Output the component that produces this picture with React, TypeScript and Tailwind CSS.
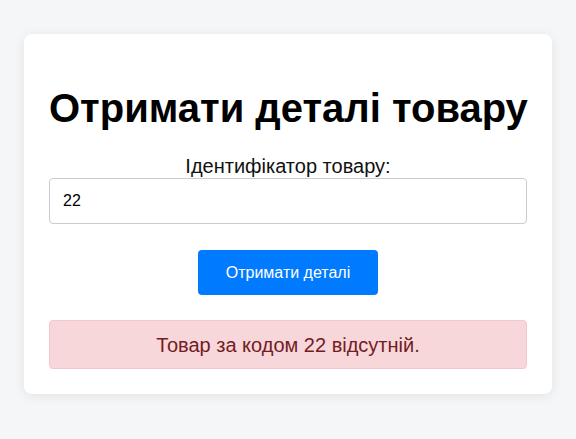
export default function App() {
  return (
    <div className="min-h-screen w-full bg-[#f5f6f8] px-6 pt-[34px] pb-10 font-['Liberation_Sans',Arial,sans-serif]">
      <div className="flex flex-col rounded-lg bg-white px-[25px] pb-[25px] pt-[50px] shadow-[0_2px_12px_rgba(0,0,0,0.08)]">
        {/* Title */}
        <h1 className="whitespace-nowrap text-center text-[40px] font-bold leading-[48px] text-black">Отримати деталі товару</h1>

        {/* Form */}
        <label className="mt-[23px] text-center text-[20px] leading-[22px] text-[#111]">Ідентифікатор товару:</label>
        <input
          type="text"
          defaultValue="22"
          className="mt-[1px] h-[46px] w-full rounded border border-[#ccc] px-[13px] text-[16px] text-black focus:outline-none"
        />
        <div className="mt-[26px] flex justify-center">
          <button className="h-[45px] w-[180px] rounded bg-[#007bff] text-[16px] text-white">Отримати деталі</button>
        </div>

        {/* Error message */}
        <div className="mt-[25px] flex h-[49px] items-center justify-center rounded border border-[#f5c6cb] bg-[#f8d7da] text-[20px] text-[#721c24]">
          Товар за кодом 22 відсутній.
        </div>
      </div>
    </div>
  )
}
